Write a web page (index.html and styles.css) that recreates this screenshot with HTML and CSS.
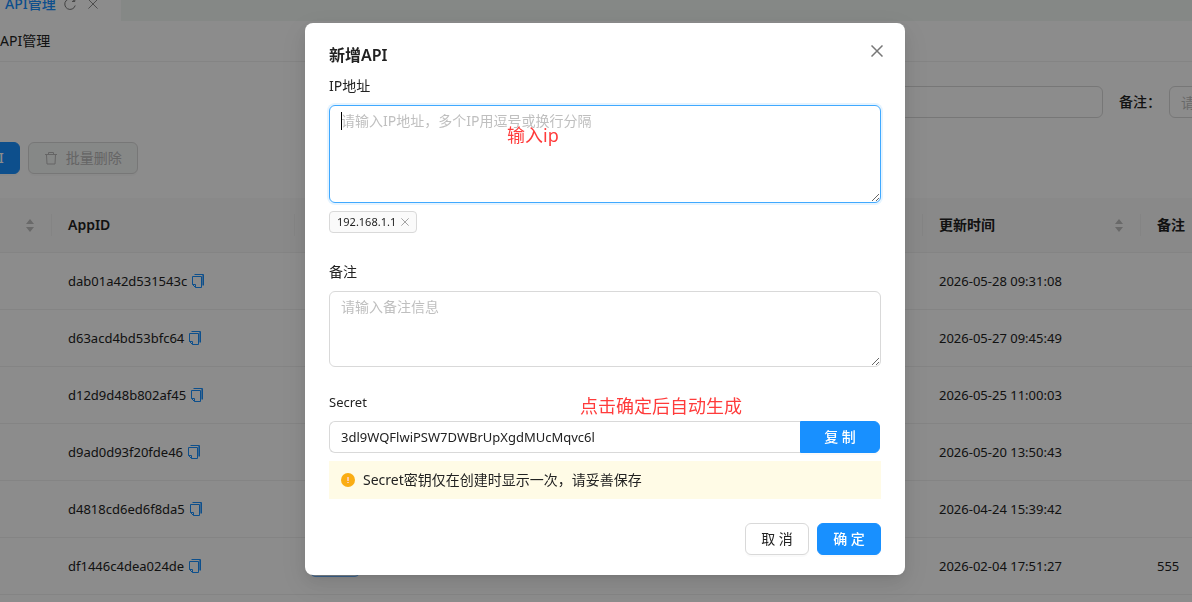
FILE: index.html
```html
<!DOCTYPE html>
<html lang="zh-CN">
  <head>
    <meta charset="UTF-8" />
    <meta name="viewport" content="width=device-width, initial-scale=1.0" />
    <title>API管理</title>
    <link rel="stylesheet" href="styles.css" />
  </head>
  <body>
    <svg width="0" height="0" class="sprite" aria-hidden="true">
      <symbol id="icon-close" viewBox="0 0 12 12">
        <path d="M0.5 0.5L11.5 11.5M11.5 0.5L0.5 11.5" />
      </symbol>
      <symbol id="icon-copy" viewBox="0 0 12 14">
        <path d="M2.5 0.5H11.5V11.5" />
        <path d="M10.5 1V11.5" opacity="0.6" />
        <path d="M0.5 2.5H9.5V13.5H3.5L0.5 10.5Z" />
        <path d="M0.5 10.5H3.5V13.5" />
      </symbol>
      <symbol id="icon-sort" viewBox="0 0 8 13">
        <path d="M4 0L8 5H0ZM0 8H8L4 13Z" />
      </symbol>
    </svg>

    <div class="tabs">
      <div class="tab">
        <a href="#">API管理</a>
        <button type="button" aria-label="刷新">
          <svg width="12" height="12" viewBox="0 0 12 12">
            <path d="M10.5 3.2A5.3 5.3 0 1 0 11.2 7.5M10.8 0.6V3.4H8" />
          </svg>
        </button>
        <button type="button" aria-label="关闭">
          <svg width="10" height="10"><use href="#icon-close" /></svg>
        </button>
      </div>
    </div>
    <div class="page-title">API管理</div>

    <form class="search">
      <input type="text" aria-label="AppID" />
      <label for="searchRemark">备注：</label>
      <input type="text" id="searchRemark" placeholder="请输入备注" />
    </form>

    <div class="toolbar">
      <button type="button" class="btn btn-primary">新增API</button>
      <button type="button" class="btn" disabled>
        <svg width="14" height="14" viewBox="0 0 14 14">
          <path d="M1 3.5H13M4.5 3.5V1.5H9.5V3.5M2.5 3.5L3 13H11L11.5 3.5" />
        </svg>
        批量删除
      </button>
    </div>

    <table>
      <colgroup>
        <col class="col-id" />
        <col class="col-app" />
        <col />
        <col class="col-time" />
        <col class="col-remark" />
      </colgroup>
      <thead>
        <tr>
          <th><svg class="sort" width="8" height="13"><use href="#icon-sort" /></svg></th>
          <th>AppID</th>
          <th></th>
          <th>更新时间<svg class="sort" width="8" height="13"><use href="#icon-sort" /></svg></th>
          <th>备注</th>
        </tr>
      </thead>
      <tbody>
        <tr>
          <td></td>
          <td>dab01a42d531543c<svg class="copy" width="12" height="14"><use href="#icon-copy" /></svg></td>
          <td></td>
          <td>2026-05-28 09:31:08</td>
          <td></td>
        </tr>
        <tr>
          <td></td>
          <td>d63acd4bd53bfc64<svg class="copy" width="12" height="14"><use href="#icon-copy" /></svg></td>
          <td></td>
          <td>2026-05-27 09:45:49</td>
          <td></td>
        </tr>
        <tr>
          <td></td>
          <td>d12d9d48b802af45<svg class="copy" width="12" height="14"><use href="#icon-copy" /></svg></td>
          <td></td>
          <td>2026-05-25 11:00:03</td>
          <td></td>
        </tr>
        <tr>
          <td></td>
          <td>d9ad0d93f20fde46<svg class="copy" width="12" height="14"><use href="#icon-copy" /></svg></td>
          <td></td>
          <td>2026-05-20 13:50:43</td>
          <td></td>
        </tr>
        <tr>
          <td></td>
          <td>d4818cd6ed6f8da5<svg class="copy" width="12" height="14"><use href="#icon-copy" /></svg></td>
          <td></td>
          <td>2026-04-24 15:39:42</td>
          <td></td>
        </tr>
        <tr>
          <td></td>
          <td>df1446c4dea024de<svg class="copy" width="12" height="14"><use href="#icon-copy" /></svg></td>
          <td><span class="ip-tag"></span></td>
          <td>2026-02-04 17:51:27</td>
          <td>555</td>
        </tr>
      </tbody>
    </table>

    <div class="mask">
      <form class="modal" role="dialog" aria-labelledby="modalTitle">
        <button type="button" class="modal-close" aria-label="关闭">
          <svg width="12" height="12"><use href="#icon-close" /></svg>
        </button>
        <h3 id="modalTitle">新增API</h3>

        <div class="field field-ip">
          <label for="ipInput">IP地址</label>
          <div class="ip-box">
            <textarea id="ipInput" class="focused" placeholder="请输入IP地址，多个IP用逗号或换行分隔"></textarea>
            <span class="caret"></span>
            <span class="note note-ip">输入ip</span>
          </div>
          <span class="tag">
            192.168.1.1
            <button type="button" aria-label="移除">
              <svg width="8" height="8"><use href="#icon-close" /></svg>
            </button>
          </span>
        </div>

        <div class="field">
          <label for="remarkInput">备注</label>
          <textarea id="remarkInput" placeholder="请输入备注信息"></textarea>
        </div>

        <div class="field">
          <label for="secretInput" class="latin">Secret</label>
          <span class="note note-secret">点击确定后自动生成</span>
          <div class="secret-row">
            <input type="text" id="secretInput" value="3dl9WQFlwiPSW7DWBrUpXgdMUcMqvc6l" readonly />
            <button type="button" class="btn btn-primary">复 制</button>
          </div>
          <div class="alert">
            <svg width="14" height="14" viewBox="0 0 14 14">
              <circle cx="7" cy="7" r="7" fill="#faad14" stroke="none" />
              <path d="M7 4V8M7 9V10" stroke="#ffc9a8" stroke-width="2" />
            </svg>
            Secret密钥仅在创建时显示一次，请妥善保存
          </div>
        </div>

        <div class="modal-footer">
          <button type="button" class="btn">取 消</button>
          <button type="submit" class="btn btn-primary">确 定</button>
        </div>
      </form>
    </div>
  </body>
</html>
```
FILE: styles.css
```css
* {
  box-sizing: border-box;
}

body {
  margin: 0;
  height: 100vh;
  overflow: hidden;
  background: #fff;
  color: #222;
  font-family: 'Noto Sans', 'Noto Sans CJK SC', sans-serif;
  font-size: 14px;
  line-height: 22px;
}

button,
input,
textarea {
  font: inherit;
  color: inherit;
}

svg {
  fill: none;
  stroke: currentColor;
}

.sprite {
  position: absolute;
}

.latin {
  font-size: 13px;
}

/* tab bar is scrolled half out of view */
.tabs {
  height: 35px;
  margin-top: -14px;
  background: #f2f7f4;
}

.tab {
  display: flex;
  align-items: center;
  gap: 8px;
  width: 121px;
  height: 100%;
  padding-left: 5px;
  background: #fff;
}

.tab a {
  color: #1890ff;
  font-weight: 500;
  text-decoration: none;
}

.tab button,
.tag button,
.modal-close {
  display: flex;
  padding: 0;
  border: 0;
  background: transparent;
  color: #777;
}

.tab button + button {
  margin-left: 4px;
}

.page-title {
  height: 41px;
  line-height: 40px;
  border-bottom: 1px solid #f0f0f0;
}

.search {
  display: flex;
  align-items: center;
  margin-top: 24px;
  margin-right: -243px;
}

.search input {
  width: 266px;
  height: 32px;
  padding: 4px 11px;
  border: 1px solid #d9d9d9;
  border-radius: 6px;
}

.search input:first-child {
  margin-left: auto;
}

.search label {
  width: 66px;
  padding-left: 16px;
  font-weight: 500;
}

.toolbar {
  display: flex;
  gap: 8px;
  margin: 24px 0 24px -63px;
}

.btn {
  display: flex;
  align-items: center;
  justify-content: center;
  gap: 8px;
  height: 32px;
  padding: 4px 15px;
  border: 1px solid #d9d9d9;
  border-radius: 6px;
  background: #fff;
  box-shadow: 0 2px 0 rgba(0, 0, 0, 0.02);
}

.btn:disabled {
  background: #f5f7f6;
  color: #b8b8b8;
}

.btn-primary {
  border-color: #1890ff;
  background: #1890ff;
  color: #fff;
  font-weight: 500;
}

table {
  width: calc(100% + 60px);
  table-layout: fixed;
  border-collapse: separate;
  border-spacing: 0;
}

.col-id {
  width: 52px;
}

.col-app {
  width: 243px;
}

.col-time {
  width: 218px;
}

.col-remark {
  width: 111px;
}

th,
td {
  height: 57px;
  padding: 0 16px;
  border-bottom: 1px solid #f0f0f0;
  text-align: left;
  white-space: nowrap;
}

th {
  position: relative;
  height: 55px;
  background: #fafafa;
  font-weight: 600;
}

th::after {
  content: '';
  position: absolute;
  top: 16px;
  right: 0;
  width: 1px;
  height: 22px;
  background: #f0f0f0;
}

td {
  font-size: 13px;
}

.sort {
  float: right;
  margin: 5px 2px 4px 0;
  fill: #bfbfbf;
  stroke: none;
}

.copy {
  margin-left: 5px;
  color: #1890ff;
  vertical-align: -2px;
}

.ip-tag {
  display: block;
  width: 48px;
  height: 22px;
  border: 1px solid #69b1ff;
  border-radius: 4px;
  background: #e6f4ff;
}

.mask {
  position: fixed;
  inset: 0;
  display: flex;
  justify-content: center;
  align-items: flex-start;
  padding: 23px 0 0 18px;
  background: rgba(0, 0, 0, 0.45);
}

.modal {
  position: relative;
  width: 600px;
  max-width: 100%;
  padding: 20px 24px;
  border-radius: 8px;
  background: #fff;
  box-shadow: 0 6px 16px rgba(0, 0, 0, 0.08), 0 3px 6px -4px rgba(0, 0, 0, 0.12),
    0 9px 28px 8px rgba(0, 0, 0, 0.05);
}

.modal-close {
  position: absolute;
  top: 22px;
  right: 22px;
  stroke-width: 1.5;
}

.modal h3 {
  margin: 0 0 8px;
  font-size: 16px;
  font-weight: 600;
  line-height: 24px;
}

.field {
  position: relative;
  margin-bottom: 24px;
}

.field-ip {
  margin-bottom: 28px;
}

.field > label {
  display: block;
  height: 22px;
  margin-bottom: 8px;
}

.field textarea {
  display: block;
  width: 100%;
  height: 76px;
  padding: 4px 11px;
  border: 1px solid #d9d9d9;
  border-radius: 6px;
  outline: none;
  resize: vertical;
}

.field textarea.focused {
  height: 98px;
  border-color: #40a9ff;
  box-shadow: 0 0 0 2px rgba(5, 145, 255, 0.1);
}

::placeholder {
  color: #bfbfbf;
}

.ip-box {
  position: relative;
  margin-bottom: 8px;
}

.caret {
  position: absolute;
  top: 7px;
  left: 12px;
  width: 1px;
  height: 18px;
  background: #000;
}

.note {
  position: absolute;
  color: #ff3b3b;
  font-size: 18px;
  line-height: 24px;
}

.note-ip {
  top: 18px;
  left: 178px;
}

.note-secret {
  top: 3px;
  left: 251px;
}

.tag {
  display: flex;
  align-items: center;
  gap: 5px;
  width: fit-content;
  height: 22px;
  padding: 0 7px;
  border: 1px solid #d9d9d9;
  border-radius: 4px;
  background: #fafafa;
  font-size: 11px;
}

.secret-row {
  display: flex;
  margin-right: 1px;
}

.secret-row input {
  flex: 1;
  height: 32px;
  padding: 4px 11px;
  border: 1px solid #d9d9d9;
  border-right: 0;
  border-radius: 6px 0 0 6px;
  outline: none;
  font-size: 13px;
}

.secret-row .btn {
  width: 80px;
  border-radius: 0 6px 6px 0;
}

.alert {
  display: flex;
  align-items: center;
  gap: 8px;
  margin-top: 8px;
  padding: 8px 12px;
  background: #fffbe6;
}

.modal-footer {
  display: flex;
  justify-content: flex-end;
  gap: 8px;
}

.modal-footer .btn {
  width: 64px;
}
```
